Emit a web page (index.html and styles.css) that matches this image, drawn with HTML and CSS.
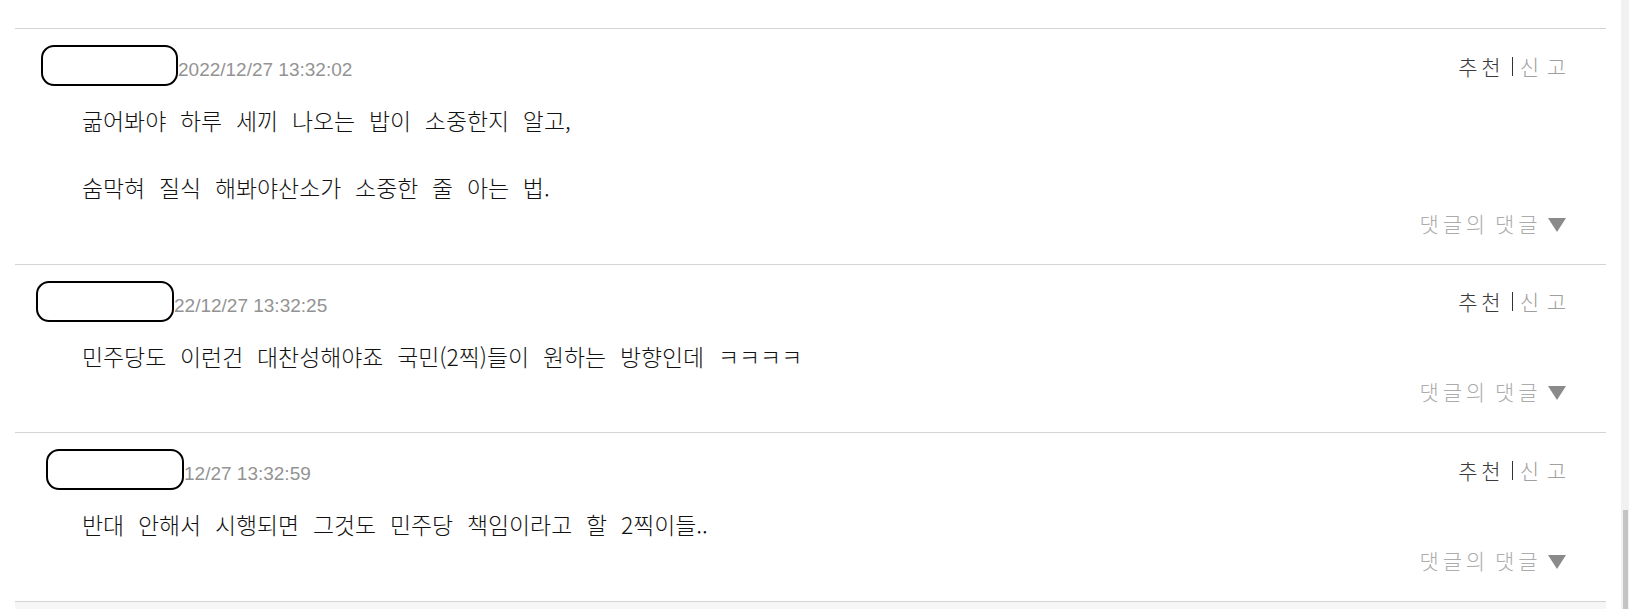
FILE: index.html
```html
<!DOCTYPE html>
<html lang="ko">
<head>
<meta charset="utf-8">
<title>댓글</title>
<link rel="stylesheet" href="styles.css">
</head>
<body>
<div class="page">
  <div class="comments">
    <div class="comment">
      <div class="head">
        <span class="mask mask-a"></span>
        <span class="date">2022/12/27 13:32:02</span>
        <div class="actions"><span class="rec">추천</span><span class="sep"></span><span class="report">신고</span></div>
      </div>
      <p class="body">굶어봐야 하루 세끼 나오는 밥이 소중한지 알고,<br><br>숨막혀 질식 해봐야산소가 소중한 줄 아는 법.</p>
      <div class="reply"><span class="reply-text">댓글의 댓글</span><span class="tri"></span></div>
    </div>
    <div class="comment">
      <div class="head">
        <span class="mask mask-b"></span>
        <span class="date">22/12/27 13:32:25</span>
        <div class="actions"><span class="rec">추천</span><span class="sep"></span><span class="report">신고</span></div>
      </div>
      <p class="body">민주당도 이런건 대찬성해야죠 국민(2찍)들이 원하는 방향인데 ㅋㅋㅋㅋ</p>
      <div class="reply"><span class="reply-text">댓글의 댓글</span><span class="tri"></span></div>
    </div>
    <div class="comment">
      <div class="head">
        <span class="mask mask-c"></span>
        <span class="date">12/27 13:32:59</span>
        <div class="actions"><span class="rec">추천</span><span class="sep"></span><span class="report">신고</span></div>
      </div>
      <p class="body">반대 안해서 시행되면 그것도 민주당 책임이라고 할 2찍이들..</p>
      <div class="reply"><span class="reply-text">댓글의 댓글</span><span class="tri"></span></div>
    </div>
  </div>
  <div class="after"></div>
</div>
<div class="scrollbar"><div class="thumb"></div></div>
</body>
</html>
```

FILE: styles.css
```css
html, body {
  margin: 0;
  padding: 0;
  background: #fff;
}
body {
  display: flex;
  height: 609px;
  overflow: hidden;
  font-family: "Noto Sans CJK KR", "Noto Sans", sans-serif;
}
.page {
  flex: 1;
  display: flex;
  flex-direction: column;
  padding-top: 28px;
  min-width: 0;
}
.comments {
  margin: 0 15px;
}
.comment {
  border-top: 1px solid #d4d4d4;
  padding: 16px 40px 27px 0;
}
.head {
  display: flex;
  align-items: center;
  height: 41px;
}
.mask {
  box-sizing: border-box;
  width: 137px;
  height: 41px;
  border: 2px solid #000;
  border-radius: 13px;
  background: #fff;
  flex: none;
}
.mask-a { margin-left: 26px; }
.mask-b { margin-left: 21px; width: 138px; }
.mask-c { margin-left: 31px; width: 138px; }
.date {
  font-family: "Liberation Sans", Arial, sans-serif;
  font-size: 19px;
  line-height: 1;
  color: #939393;
  padding-top: 8px;
}
.actions {
  margin-left: auto;
  margin-right: -7.5px;
  display: flex;
  align-items: center;
  font-size: 21px;
  font-weight: 300;
  line-height: 1;
  padding-top: 1px;
}
.rec {
  color: #3a3a3a;
  letter-spacing: 3.7px;
}
.sep {
  display: inline-block;
  width: 1px;
  height: 19px;
  background: #333;
  margin: 0 7.3px 0 7.4px;
}
.report {
  color: #a0a0a0;
  letter-spacing: 7.5px;
}
.body {
  margin: 18px 0 0;
  padding-left: 67px;
  font-size: 22.9px;
  font-weight: 300;
  line-height: 33.5px;
  word-spacing: 7.4px;
  color: #111;
}
.reply {
  margin-top: 4px;
  height: 28px;
  display: flex;
  justify-content: flex-end;
  align-items: center;
  font-size: 21px;
  font-weight: 300;
  line-height: 28px;
}
.reply-text {
  color: #acacac;
  letter-spacing: 3.9px;
  word-spacing: -3.8px;
}
.tri {
  width: 0;
  height: 0;
  border-left: 9px solid transparent;
  border-right: 9px solid transparent;
  border-top: 14px solid #8a8a8a;
  margin: 4px 0 0 6.5px;
}
.after {
  flex: 1;
  margin: 0 15px;
  border-top: 1px solid #d4d4d4;
  background: #f6f6f6;
}
.scrollbar {
  width: 8px;
  flex: none;
  background: #f1f1f1;
  display: flex;
  flex-direction: column;
  justify-content: flex-end;
  padding: 0 1px 0 2px;
  box-sizing: border-box;
}
.thumb {
  height: 99px;
  background: #c4c4c4;
}
```
